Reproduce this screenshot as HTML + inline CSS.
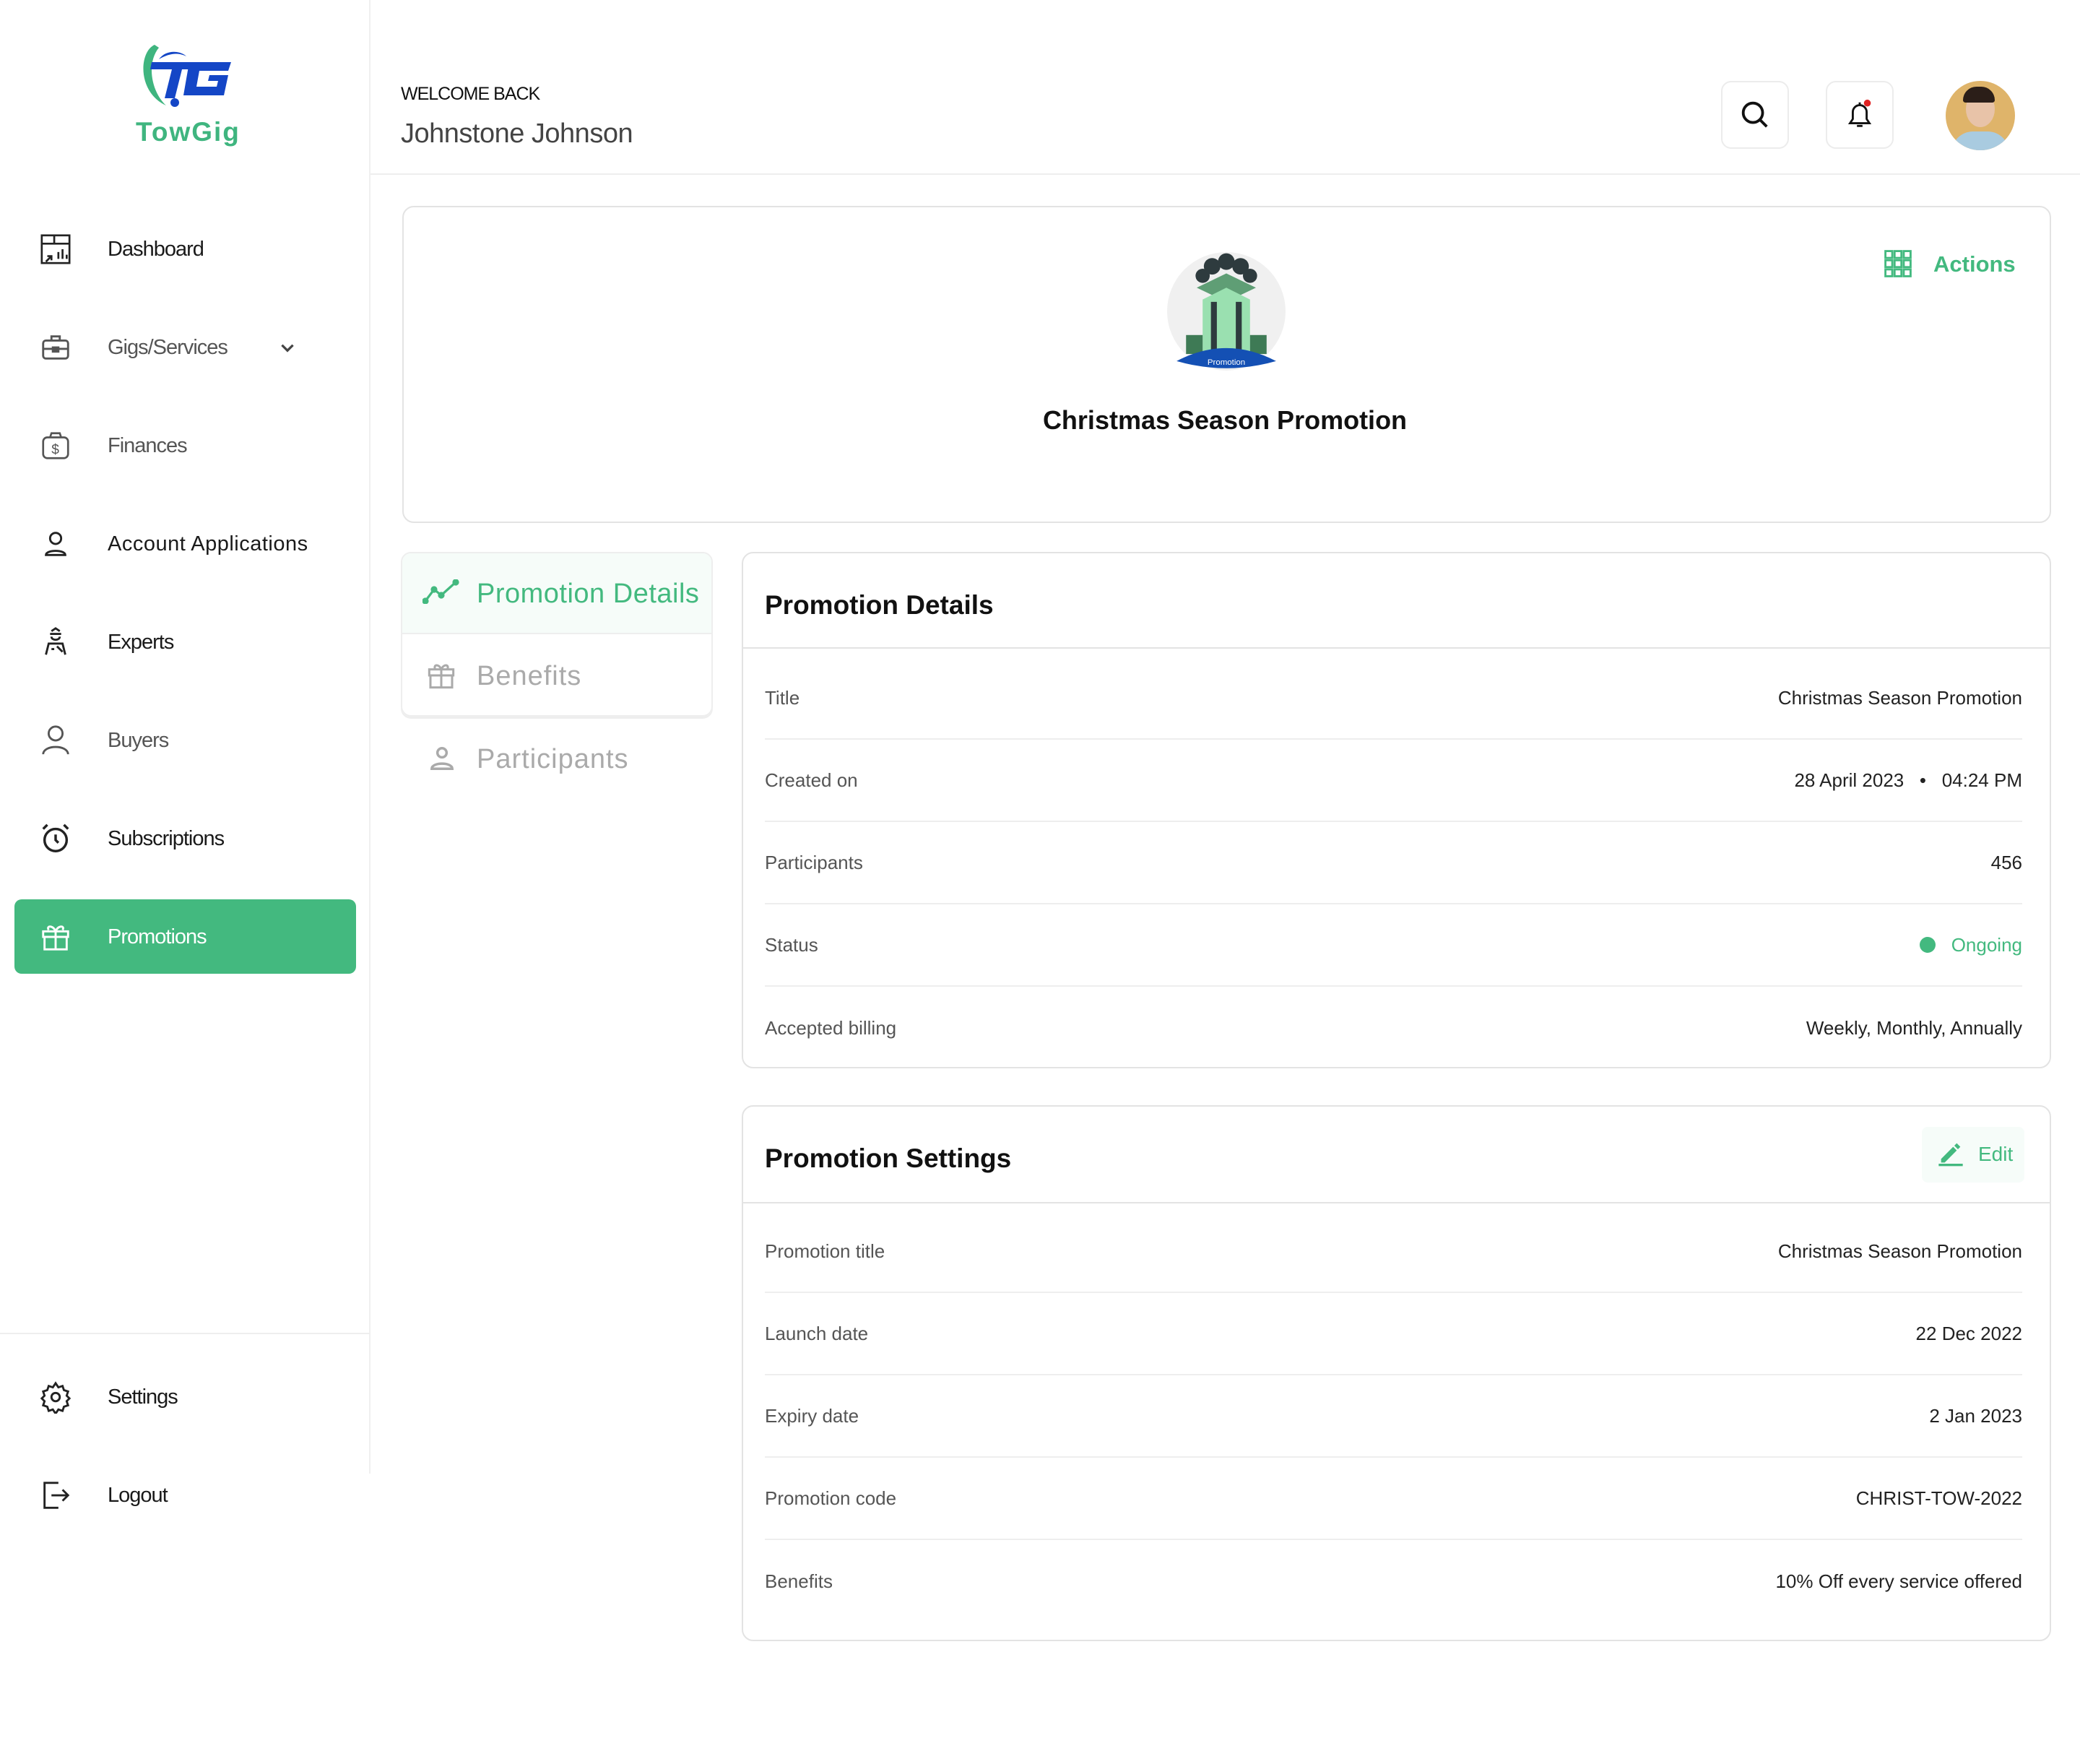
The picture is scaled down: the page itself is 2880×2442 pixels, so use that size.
<!DOCTYPE html>
<html><head><meta charset="utf-8"><style>
*{margin:0;padding:0;box-sizing:border-box}
body{width:2880px;height:2442px;background:#fff;font-family:"Liberation Sans",sans-serif;position:relative;overflow:hidden;color:#111}
.a{position:absolute}
.nav{position:absolute;left:0;width:513px;height:100px;display:flex;align-items:center}
.nav svg{position:absolute;left:54px;width:46px;height:46px}
.nav span{position:absolute;left:149px;font-size:29px;letter-spacing:-1px;color:#1a1a1a}
.card{position:absolute;border:2px solid #e3e3e3;border-radius:16px;background:#fff}
.row{position:absolute;left:30px;right:38px;height:114px;border-bottom:2px solid #eeeeee;display:flex;justify-content:space-between;align-items:center;font-size:26px}
.row .l{color:#555}
.row .r{color:#222}
.row.last{border-bottom:none}
.ct{position:absolute;left:30px;font-size:37px;font-weight:bold;color:#111}
</style></head><body>
<div class="a" style="left:511px;top:0;width:2px;height:2040px;background:#f0f0f0"></div>
<svg class="a" style="left:190px;top:58px" width="136" height="96" viewBox="0 0 136 96">
<path d="M24 4 C2 14 0 70 40 88 C20 70 12 30 30 8 Z" fill="#3fb57f"/>
<path d="M20 28 L85 28 L82 38 L62 38 L52 78 L38 78 L48 38 L18 38 Z" fill="#1446c6"/>
<path d="M30 24 C40 10 60 12 68 20 C56 14 44 16 30 24Z" fill="#1446c6"/>
<circle cx="52" cy="84" r="6" fill="#1446c6"/>
<path d="M72 28 L130 28 L126 40 L86 40 L82 62 L110 62 L112 54 L98 54 L100 46 L126 46 L120 74 L64 74 Z" fill="#1446c6"/>
</svg>
<div class="a" style="left:188px;top:162px;font-size:37px;font-weight:bold;color:#3fb57f;letter-spacing:2px">TowGig</div>

<div class="nav" style="top:295px"><svg viewBox="0 0 24 24" fill="none" stroke="#222" stroke-width="1.4"><rect x="2" y="2" width="20" height="20"/><path d="M2 8h20M11 2v6M5 21l4-4M6 17h3v3M14 19v-5M17 19v-7M20 19v-3"/></svg><span>Dashboard</span></div>
<div class="nav" style="top:431px"><svg viewBox="0 0 24 24" fill="none" stroke="#555" stroke-width="1.5"><rect x="3" y="7" width="18" height="13" rx="2"/><path d="M9 7V4h6v3M3 13h18"/><rect x="10" y="12" width="4" height="3" fill="#555"/></svg><span style="color:#555">Gigs/Services</span>
<svg viewBox="0 0 24 24" style="left:385px;width:26px;height:26px" fill="none" stroke="#444" stroke-width="3"><path d="M5 9l7 7 7-7"/></svg></div>
<div class="nav" style="top:567px"><svg viewBox="0 0 24 24" fill="none" stroke="#555" stroke-width="1.4"><rect x="3" y="6" width="18" height="15" rx="3"/><path d="M8 6l1-3h6l1 3"/><text x="9" y="18" font-size="10" fill="#555" stroke="none" font-family="Liberation Sans">$</text></svg><span style="color:#555">Finances</span></div>
<div class="nav" style="top:703px"><svg viewBox="0 0 24 24" fill="none" stroke="#222" stroke-width="1.5"><circle cx="12" cy="8" r="4"/><path d="M5 20c0-4 14-4 14 0z"/></svg><span style="letter-spacing:0.5px">Account Applications</span></div>
<div class="nav" style="top:839px"><svg viewBox="0 0 24 24" fill="none" stroke="#222" stroke-width="1.5"><path d="M8 6h8M9 4l3-2 3 2M9 8c0 3 6 3 6 0M5 21l2-8h10l2 8M9 17h2M13 15l4 4"/></svg><span>Experts</span></div>
<div class="nav" style="top:975px"><svg viewBox="0 0 24 24" fill="none" stroke="#555" stroke-width="1.5"><circle cx="12" cy="7" r="5"/><path d="M3 22c0-7 18-7 18 0"/></svg><span style="color:#555">Buyers</span></div>
<div class="nav" style="top:1111px"><svg viewBox="0 0 24 24" fill="none" stroke="#222" stroke-width="1.8"><circle cx="12" cy="13" r="8"/><path d="M12 9v4l2 2M3 5l3-3M21 5l-3-3"/></svg><span>Subscriptions</span></div>
<div class="a" style="left:20px;top:1245px;width:473px;height:103px;background:#43b97f;border-radius:10px"></div>
<div class="nav" style="top:1247px"><svg viewBox="0 0 24 24" fill="none" stroke="#fff" stroke-width="1.5"><rect x="3" y="8" width="18" height="4"/><rect x="4" y="12" width="16" height="9"/><path d="M12 8v13M12 8c-2-5-7-4-5-1M12 8c2-5 7-4 5-1"/></svg><span style="color:#fff">Promotions</span></div>
<div class="a" style="left:0;top:1845px;width:513px;height:2px;background:#eee"></div>
<div class="nav" style="top:1884px"><svg viewBox="0 0 24 24" fill="none" stroke="#222" stroke-width="1.5"><circle cx="12" cy="12" r="3"/><path d="M12 2l2 3 3-1 1 3 3 1-1 3 2 2-2 2 1 3-3 1-1 3-3-1-2 3-2-3-3 1-1-3-3-1 1-3-2-2 2-2-1-3 3-1 1-3 3 1z"/></svg><span>Settings</span></div>
<div class="nav" style="top:2020px"><svg viewBox="0 0 24 24" fill="none" stroke="#222" stroke-width="1.5"><path d="M14 3H4v18h10M9 12h12M17 8l4 4-4 4"/></svg><span>Logout</span></div>

<div class="a" style="left:555px;top:116px;font-size:25px;letter-spacing:-1px;color:#111">WELCOME BACK</div>
<div class="a" style="left:555px;top:164px;font-size:38px;color:#444;letter-spacing:-0.5px">Johnstone Johnson</div>
<div class="a" style="left:513px;top:240px;width:2367px;height:2px;background:#eee"></div>
<div class="a" style="left:2383px;top:112px;width:94px;height:94px;border:2px solid #ececec;border-radius:14px"></div>
<svg class="a" style="left:2407px;top:136px" width="46" height="46" viewBox="0 0 24 24" fill="none" stroke="#111" stroke-width="2"><circle cx="10.5" cy="10.5" r="7"/><path d="M16 16l4.5 4.5"/></svg>
<div class="a" style="left:2528px;top:112px;width:94px;height:94px;border:2px solid #ececec;border-radius:14px"></div>
<svg class="a" style="left:2552px;top:136px" width="46" height="46" viewBox="0 0 24 24" fill="none" stroke="#111" stroke-width="1.5"><path d="M5 18h14l-2-3v-5a5 5 0 0 0-10 0v5z M12 3v2 M10 20h4"/><circle cx="17.5" cy="3.5" r="2.5" fill="#e02424" stroke="none"/></svg>
<div class="a" style="left:2694px;top:112px;width:96px;height:96px;border-radius:50%;background:#dfb46a;overflow:hidden">
<div class="a" style="left:28px;top:14px;width:40px;height:50px;border-radius:50%;background:#e8c3a8"></div>
<div class="a" style="left:24px;top:8px;width:44px;height:22px;border-radius:22px 22px 4px 4px;background:#2b1e18"></div>
<div class="a" style="left:8px;top:70px;width:80px;height:40px;border-radius:30px 30px 0 0;background:#a9cbe0"></div></div>

<div class="card" style="left:557px;top:285px;width:2283px;height:439px"></div>
<svg class="a" style="left:1616px;top:349px" width="164" height="164" viewBox="0 0 100 100">
<circle cx="50" cy="50" r="50" fill="#f0f0f0"/>
<circle cx="38" cy="12" r="7" fill="#2e3b3e"/><circle cx="50" cy="8" r="7" fill="#2e3b3e"/><circle cx="62" cy="12" r="7" fill="#2e3b3e"/><circle cx="30" cy="20" r="6" fill="#2e3b3e"/><circle cx="70" cy="20" r="6" fill="#2e3b3e"/>
<path d="M25 30 L50 18 L75 30 L50 42Z" fill="#5f9e75"/>
<path d="M30 40 L50 30 L70 40 L70 90 L30 90Z" fill="#9ae0b0"/>
<rect x="37" y="42" width="5" height="48" fill="#2e3b3e"/><rect x="58" y="42" width="5" height="48" fill="#2e3b3e"/>
<rect x="16" y="70" width="14" height="16" fill="#3e7a55"/><rect x="70" y="70" width="14" height="16" fill="#3e7a55"/>
<path d="M8 92 Q50 70 92 92 Q50 104 8 92Z" fill="#1450b4"/>
<text x="50" y="95" font-size="7" fill="#fff" text-anchor="middle" font-family="Liberation Sans">Promotion</text>
</svg>
<div class="a" style="left:1000px;width:1392px;top:561px;text-align:center;font-size:36px;font-weight:bold;color:#111">Christmas Season Promotion</div>
<svg class="a" style="left:2609px;top:346px" width="38" height="38" viewBox="0 0 12 12" fill="none" stroke="#43b97f" stroke-width="0.9"><rect x="0.5" y="0.5" width="3" height="3"/><rect x="4.5" y="0.5" width="3" height="3"/><rect x="8.5" y="0.5" width="3" height="3"/><rect x="0.5" y="4.5" width="3" height="3"/><rect x="4.5" y="4.5" width="3" height="3"/><rect x="8.5" y="4.5" width="3" height="3"/><rect x="0.5" y="8.5" width="3" height="3"/><rect x="4.5" y="8.5" width="3" height="3"/><rect x="8.5" y="8.5" width="3" height="3"/></svg>
<div class="a" style="left:2677px;top:348px;font-size:31px;font-weight:bold;color:#43b97f">Actions</div>

<div class="a" style="left:555px;top:764px;width:432px;height:228px;border:2px solid #eee;border-radius:14px;box-shadow:0 3px 0 #eee;overflow:hidden">
<div style="height:112px;background:#f6fcf9;border-bottom:2px solid #eee"></div></div>
<svg class="a" style="left:585px;top:802px" width="52" height="34" viewBox="0 0 26 17" fill="none" stroke="#43b97f" stroke-width="1.6"><path d="M2 15l6-8 5 4 10-9"/><circle cx="2" cy="15" r="1.5" fill="#43b97f"/><circle cx="8" cy="7" r="1.5" fill="#43b97f"/><circle cx="13" cy="11" r="1.5" fill="#43b97f"/><circle cx="23" cy="2" r="1.5" fill="#43b97f"/></svg>
<div class="a" style="left:660px;top:801px;font-size:38px;color:#43b97f;letter-spacing:0.5px">Promotion Details</div>
<svg class="a" style="left:591px;top:915px" width="40" height="40" viewBox="0 0 24 24" fill="none" stroke="#aaa" stroke-width="1.8"><rect x="2" y="7" width="20" height="5"/><rect x="3" y="12" width="18" height="10"/><path d="M12 7v15M12 7c-2-5-7-4-5 0M12 7c2-5 7-4 5 0"/></svg>
<div class="a" style="left:660px;top:915px;font-size:38px;color:#aaa;letter-spacing:1px">Benefits</div>
<svg class="a" style="left:593px;top:1031px" width="38" height="38" viewBox="0 0 24 24" fill="none" stroke="#aaa" stroke-width="2.2"><circle cx="12" cy="7" r="4"/><path d="M3 21c0-6 18-6 18 0z"/></svg>
<div class="a" style="left:660px;top:1030px;font-size:38px;color:#aaa;letter-spacing:1px">Participants</div>

<div class="card" style="left:1027px;top:764px;width:1813px;height:715px">
<div class="ct" style="top:51px">Promotion Details</div>
<div class="a" style="left:0;right:0;top:130px;height:2px;background:#e3e3e3"></div>
<div class="row" style="top:144px"><span class="l">Title</span><span class="r">Christmas Season Promotion</span></div>
<div class="row" style="top:258px"><span class="l">Created on</span><span class="r">28 April 2023 &nbsp;&nbsp;•&nbsp;&nbsp; 04:24 PM</span></div>
<div class="row" style="top:372px"><span class="l">Participants</span><span class="r">456</span></div>
<div class="row" style="top:486px"><span class="l">Status</span><span class="r" style="color:#43b97f"><span style="display:inline-block;width:22px;height:22px;border-radius:50%;background:#43b97f;vertical-align:-2px;margin-right:22px"></span>Ongoing</span></div>
<div class="row last" style="top:600px"><span class="l">Accepted billing</span><span class="r">Weekly, Monthly, Annually</span></div>
</div>

<div class="card" style="left:1027px;top:1530px;width:1813px;height:742px">
<div class="ct" style="top:51px">Promotion Settings</div>
<div class="a" style="left:1632px;top:28px;width:142px;height:77px;background:#f6fcf9;border-radius:8px"></div>
<svg class="a" style="left:1652px;top:44px" width="40" height="40" viewBox="0 0 24 24" fill="#43b97f"><path d="M4 17l10-10 3 3-10 10H4z M15 6l2-2 3 3-2 2z"/><rect x="2" y="21" width="20" height="2"/></svg>
<div class="a" style="left:1710px;top:50px;font-size:28px;color:#43b97f">Edit</div>
<div class="a" style="left:0;right:0;top:132px;height:2px;background:#e3e3e3"></div>
<div class="row" style="top:144px"><span class="l">Promotion title</span><span class="r">Christmas Season Promotion</span></div>
<div class="row" style="top:258px"><span class="l">Launch date</span><span class="r">22 Dec 2022</span></div>
<div class="row" style="top:372px"><span class="l">Expiry date</span><span class="r">2 Jan 2023</span></div>
<div class="row" style="top:486px"><span class="l">Promotion code</span><span class="r">CHRIST-TOW-2022</span></div>
<div class="row last" style="top:600px"><span class="l">Benefits</span><span class="r">10% Off every service offered</span></div>
</div>
</body></html>
